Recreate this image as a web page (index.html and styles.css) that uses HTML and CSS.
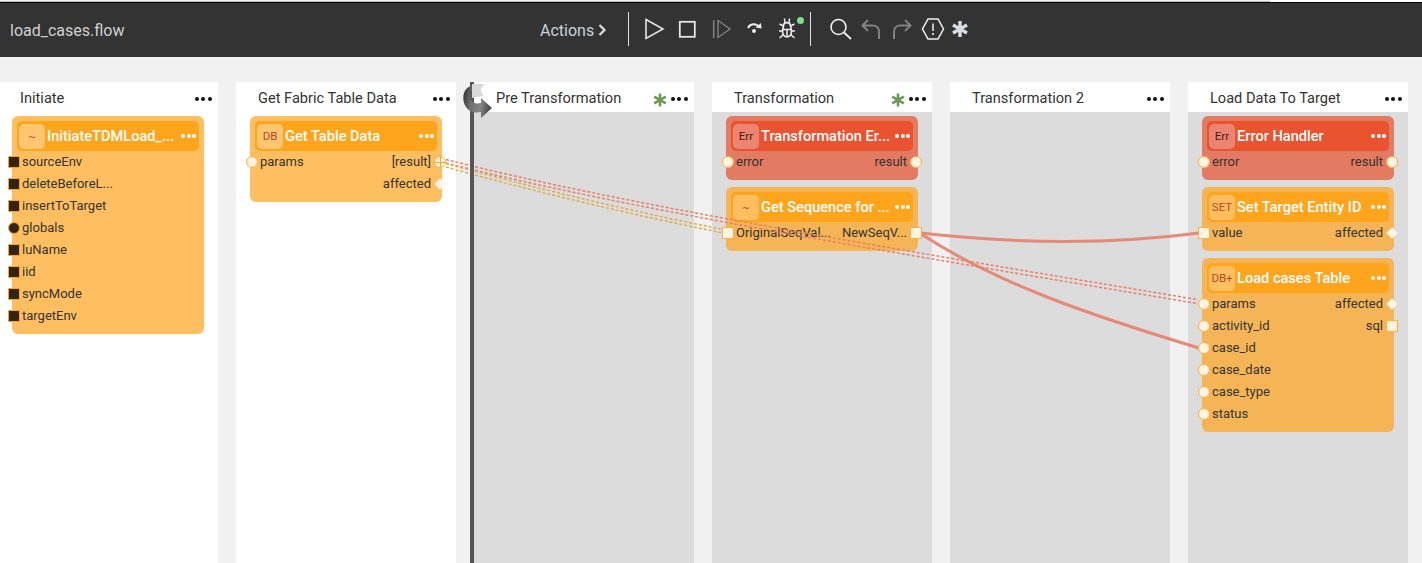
FILE: index.html
```html
<!DOCTYPE html>
<html lang="en">
<head>
<meta charset="utf-8">
<title>load_cases.flow</title>
<link rel="stylesheet" href="styles.css">
</head>
<body>
<div class="app">
  <div class="topline"><div class="topline-fill"></div></div>
  <header class="bar">
    <div class="file">load_cases.flow</div>
    <div class="actions">Actions<svg class="chev" viewBox="0 0 10 14"><path d="M2.5 2 L7.5 7 L2.5 12" fill="none" stroke="#ddd" stroke-width="2.2"/></svg></div>
    <div class="sep sep-a"></div>
    <div class="tools tools-a">
      <svg class="ico" viewBox="0 0 24 24"><path d="M4 2.5 L21 12 L4 21.5 Z" fill="none" stroke="#e4e4e4" stroke-width="1.6"/></svg>
      <svg class="ico" viewBox="0 0 24 24"><rect x="4.8" y="4.8" width="15" height="15" fill="none" stroke="#e4e4e4" stroke-width="1.8"/></svg>
      <svg class="ico" viewBox="0 0 24 24"><path d="M5.7 3 V21" stroke="#808080" stroke-width="1.6" fill="none"/><path d="M10 3.5 L22 12 L10 20.5 Z" fill="none" stroke="#808080" stroke-width="1.4"/></svg>
      <svg class="ico" viewBox="0 0 24 24"><path d="M7 11 C9 6.5 15 6 18 10" fill="none" stroke="#eee" stroke-width="2"/><path d="M14.5 10.5 L20.5 11.5 L20 6 Z" fill="#eee"/><circle cx="13" cy="14" r="2" fill="#eee"/></svg>
      <svg class="ico" viewBox="0 0 24 24"><path d="M9.5 9 C9.500 4.500 16.500 4.500 16.500 9 L17.500 14 C17.500 22 8.500 22 8.500 14 Z" fill="none" stroke="#ececec" stroke-width="1.700"/><path d="M9 12.500 H17 M13 12.500 V20 M10.500 1.500 L11 6 M15.500 1.500 L15 6 M9.500 9 L5.500 7 M16.500 9 L20.500 7 M9 14 H5 M17 14 H21 M9.500 17.500 L5.500 21 M16.500 17.500 L20.500 21" fill="none" stroke="#ececec" stroke-width="1.500"/></svg>
      <span class="live-dot"></span>
    </div>
    <div class="sep sep-b"></div>
    <div class="tools tools-b">
      <svg class="ico" viewBox="0 0 24 24"><circle cx="10.500" cy="10" r="7.500" fill="none" stroke="#f0f0f0" stroke-width="1.600"/><path d="M16 15.500 L23 22" stroke="#f0f0f0" stroke-width="1.800"/></svg>
      <svg class="ico" viewBox="0 0 24 24"><path d="M9 3 L3.500 8.500 L9 14 M4 8.500 H14 C18.500 8.500 20 12 20 15 V22" fill="none" stroke="#828282" stroke-width="2"/></svg>
      <svg class="ico" viewBox="0 0 24 24"><path d="M15 3 L20.500 8.500 L15 14 M20 8.500 H10 C5.500 8.500 4 12 4 15 V22" fill="none" stroke="#828282" stroke-width="2"/></svg>
      <svg class="ico" viewBox="0 0 24 24"><path d="M7 2 H17 L22.500 12 L17 22 H7 L1.500 12 Z" fill="none" stroke="#f0f0f0" stroke-width="1.500"/><path d="M12 6.500 V14" stroke="#f0f0f0" stroke-width="1.500"/><circle cx="12" cy="17" r="1.100" fill="#f0f0f0"/></svg>
      <svg class="ico ico-star" viewBox="0 0 24 24"><path d="M12 4 V20 M5 8 L19 16 M19 8 L5 16" stroke="#d8dce4" stroke-width="3.400" fill="none"/></svg>
    </div>
  </header>

  <main class="stage">
    <section class="col col-light">
      <div class="col-head"><span class="col-title">Initiate</span><span class="dots"><i></i><i></i><i></i></span></div>
      <div class="node node-bright">
        <div class="node-head"><span class="badge">~</span><span class="node-title">InitiateTDMLoad_...</span><span class="dots dots-white"><i></i><i></i><i></i></span></div>
        <div class="row"><span class="port port-l port-dark"></span><span>sourceEnv</span></div>
        <div class="row"><span class="port port-l port-dark"></span><span>deleteBeforeL...</span></div>
        <div class="row"><span class="port port-l port-dark"></span><span>insertToTarget</span></div>
        <div class="row"><span class="port port-l port-dark port-round"></span><span>globals</span></div>
        <div class="row"><span class="port port-l port-dark"></span><span>luName</span></div>
        <div class="row"><span class="port port-l port-dark"></span><span>iid</span></div>
        <div class="row"><span class="port port-l port-dark"></span><span>syncMode</span></div>
        <div class="row"><span class="port port-l port-dark"></span><span>targetEnv</span></div>
      </div>
    </section>

    <section class="col col-light">
      <div class="col-head"><span class="col-title">Get Fabric Table Data</span><span class="dots"><i></i><i></i><i></i></span></div>
      <div class="node node-bright">
        <div class="node-head"><span class="badge">DB</span><span class="node-title">Get Table Data</span><span class="dots dots-white"><i></i><i></i><i></i></span></div>
        <div class="row"><span class="port port-l port-round"></span><span>params</span><span>[result]</span><span class="port port-r port-round port-cross"></span></div>
        <div class="row row-end"><span>affected</span><span class="port port-r port-diamond"></span></div>
      </div>
    </section>

    <section class="col col-gray">
      <div class="col-head"><span class="col-title">Pre Transformation</span><svg class="flag-star" viewBox="0 0 14 14"><path d="M7 0.500 V13.500 M1.200 3.700 L12.800 10.300 M12.800 3.700 L1.200 10.300" stroke="#6a9b55" stroke-width="2.600" fill="none"/></svg><span class="dots"><i></i><i></i><i></i></span></div>
    </section>

    <section class="col col-gray">
      <div class="col-head"><span class="col-title">Transformation</span><svg class="flag-star" viewBox="0 0 14 14"><path d="M7 0.500 V13.500 M1.200 3.700 L12.800 10.300 M12.800 3.700 L1.200 10.300" stroke="#6a9b55" stroke-width="2.600" fill="none"/></svg><span class="dots"><i></i><i></i><i></i></span></div>
      <div class="node node-err">
        <div class="node-head"><span class="badge">Err</span><span class="node-title">Transformation Er...</span><span class="dots dots-white"><i></i><i></i><i></i></span></div>
        <div class="row"><span class="port port-l port-round"></span><span>error</span><span>result</span><span class="port port-r port-round"></span></div>
      </div>
      <div class="node">
        <div class="node-head"><span class="badge">~</span><span class="node-title">Get Sequence for ...</span><span class="dots dots-white"><i></i><i></i><i></i></span></div>
        <div class="row"><span class="port port-l"></span><span>OriginalSeqVal...</span><span>NewSeqV...</span><span class="port port-r"></span></div>
      </div>
    </section>

    <section class="col col-gray">
      <div class="col-head"><span class="col-title">Transformation 2</span><span class="dots"><i></i><i></i><i></i></span></div>
    </section>

    <section class="col col-gray">
      <div class="col-head"><span class="col-title">Load Data To Target</span><span class="dots"><i></i><i></i><i></i></span></div>
      <div class="node node-err">
        <div class="node-head"><span class="badge">Err</span><span class="node-title">Error Handler</span><span class="dots dots-white"><i></i><i></i><i></i></span></div>
        <div class="row"><span class="port port-l port-round"></span><span>error</span><span>result</span><span class="port port-r port-round"></span></div>
      </div>
      <div class="node">
        <div class="node-head"><span class="badge">SET</span><span class="node-title">Set Target Entity ID</span><span class="dots dots-white"><i></i><i></i><i></i></span></div>
        <div class="row"><span class="port port-l"></span><span>value</span><span>affected</span><span class="port port-r port-diamond"></span></div>
      </div>
      <div class="node">
        <div class="node-head"><span class="badge">DB+</span><span class="node-title">Load cases Table</span><span class="dots dots-white"><i></i><i></i><i></i></span></div>
        <div class="row"><span class="port port-l port-round"></span><span>params</span><span>affected</span><span class="port port-r port-diamond"></span></div>
        <div class="row"><span class="port port-l port-round"></span><span>activity_id</span><span>sql</span><span class="port port-r"></span></div>
        <div class="row"><span class="port port-l port-round"></span><span>case_id</span></div>
        <div class="row"><span class="port port-l port-round"></span><span>case_date</span></div>
        <div class="row"><span class="port port-l port-round"></span><span>case_type</span></div>
        <div class="row"><span class="port port-l port-round"></span><span>status</span></div>
      </div>
    </section>
  </main>

  <svg class="wires" viewBox="0 0 1422 563">
    <path class="dash dash-red" d="M446 159.500 C 620 204, 900 250, 1197 299.500"/>
    <path class="dash dash-red" d="M446 163 C 620 207.500, 900 254, 1197 303.500"/>
    <path class="dash dash-yellow" d="M446 163.500 C 530 187, 630 211, 721 229"/>
    <path class="dash dash-yellow" d="M446 167 C 530 190.500, 630 214.500, 721 232.500"/>
    <path class="solid" d="M921 233 C 1000 242, 1100 246, 1199 233"/>
    <path class="solid" d="M921 234 C 1000 285, 1090 315, 1199 348"/>
  </svg>

  <div class="split"></div>
  <svg class="curl" viewBox="0 0 32 38">
    <defs>
      <linearGradient id="swoosh" x1="0" y1="0" x2="1" y2="0.200">
        <stop offset="0" stop-color="#2a2a2a"/>
        <stop offset="0.350" stop-color="#707070"/>
        <stop offset="0.700" stop-color="#858585"/>
        <stop offset="1" stop-color="#4e4e4e"/>
      </linearGradient>
    </defs>
    <path d="M10 1 H22 L18.500 7 L21.500 13 L10 15 Z" fill="#d8d8d8"/>
    <path d="M10 3 C1 4,-1 17,4 24 C8 30,14 30,19 29 L19 35 L30 25 L19 15 L19 20 C14 21,11 20,9 17 C7 13,8 9,10 7 Z" fill="url(#swoosh)"/>
  </svg>
</div>
</body>
</html>
```
FILE: styles.css
```css
* { box-sizing: border-box; }
html, body { margin: 0; padding: 0; }
body { background: #f1f1f1; font-family: Roboto, "Liberation Sans", sans-serif; color: #333; }
.app { position: relative; width: 1422px; height: 563px; overflow: hidden; }

.topline { height: 2px; background: #fff; }
.topline-fill { width: 1270px; height: 2px; background: linear-gradient(#f0f0f0 50%, #bdbdbd 50%); }

.bar {
  display: flex;
  align-items: center;
  height: 55px;
  padding-left: 10px;
  background: #333;
  border-top: 1px solid #000;
}
.file { width: 530px; font-size: 16px; color: #d0d0d0; }
.actions { display: flex; align-items: center; width: 88px; font-size: 16px; color: #c8d0d8; }
.chev { width: 10px; height: 14px; margin-left: 3px; }
.sep { width: 1px; height: 34px; background: #e0e0e0; margin-top: -2px; }
.tools { display: flex; align-items: center; margin-top: -2px; position: relative; }
.tools-a { gap: 9px; margin-left: 13px; width: 168px; }
.tools-b { gap: 7px; margin-left: 17px; }
.ico { width: 24px; height: 24px; display: block; }
.ico-star { margin-left: -4px; }
.live-dot {
  position: absolute;
  left: 155px;
  top: 0;
  width: 7px;
  height: 7px;
  border-radius: 50%;
  background: #7fe08a;
}

.stage {
  display: flex;
  gap: 18px;
  height: 506px;
  margin-left: -2px;
  padding-top: 25px;
}
.col { flex: 0 0 220px; min-width: 0; display: flex; flex-direction: column; gap: 7px; }
.col-light { background: #fff; }
.col-gray { background: #dcdcdc; }
.col-head {
  display: flex;
  align-items: center;
  height: 30px;
  margin-bottom: -3px;
  padding: 2px 6px 0 22px;
  background: #fff;
}
.col-title { flex: 1; font-size: 14.600px; color: #333; }
.dots { display: flex; gap: 2.700px; margin-top: 2px; }
.dots i { width: 4px; height: 4px; border-radius: 50%; background: #111; }
.dots-white { gap: 1.500px; margin-top: -1px; }
.dots-white i { background: #fff; }
.flag-star {
  width: 14px;
  height: 14px;
  margin-right: 4px;
  margin-top: 4px;
}

.node {
  position: relative;
  margin: 0 14px;
  padding: 5px 0 7px;
  border-radius: 6px;
  background: #f5b556;
}
.node-bright { background: #ffbf60; }
.node-err { background: #e37b63; }
.node-head {
  display: flex;
  align-items: center;
  height: 30px;
  margin: 0 5px;
  padding: 0 3px 0 2px;
  border-radius: 5px;
  background: #ffa41d;
  color: #fff;
}
.node-err .node-head { background: #e9532f; }
.badge {
  flex: 0 0 26px;
  height: 25px;
  border-radius: 5px;
  background: #ffbf60;
  color: #b5492a;
  font-size: 11.500px;
  line-height: 25px;
  text-align: center;
}
.node-bright .badge { background: #ffc670; }
.node-err .badge { background: #ed8470; color: #3d2018; }
.node-title { flex: 1; margin-left: 2px; font-size: 14.600px; font-weight: 500; white-space: nowrap; overflow: hidden; }

.row {
  position: relative;
  display: flex;
  justify-content: space-between;
  align-items: center;
  height: 22px;
  padding: 0 11px 2px 10px;
  font-size: 13px;
  color: #333;
}
.row-end { justify-content: flex-end; }

.port {
  position: absolute;
  top: 5px;
  width: 12px;
  height: 12px;
  background: #fff4e3;
  border: 1px solid #ffaf3a;
  z-index: 3;
}
.port-l { left: -4px; }
.port-r { right: -4px; }
.port-round { border-radius: 50%; }
.port-dark { background: #2f2418; border-color: #ffa41d; }
.port-diamond {
  top: 7px;
  right: -2px;
  width: 8px;
  height: 8px;
  border: 0;
  transform: rotate(45deg);
}
.port-cross {
  background:
    linear-gradient(#ffa41d, #ffa41d) center / 100% 1px no-repeat,
    linear-gradient(#ffa41d, #ffa41d) center / 1px 100% no-repeat,
    #fff4e3;
}

.wires { position: absolute; left: 0; top: 0; width: 1422px; height: 563px; z-index: 2; pointer-events: none; }
.dash { fill: none; stroke-width: 1.500; stroke-dasharray: 3 2; }
.dash-red { stroke: #e8806a; }
.dash-yellow { stroke: #dcb048; }
.solid { fill: none; stroke: #e5826c; stroke-width: 3; stroke-opacity: 0.92; }

.split { position: absolute; left: 470px; top: 82px; bottom: 0; width: 4px; background: #555; z-index: 3; }
.curl { position: absolute; left: 462px; top: 83px; width: 32px; height: 38px; z-index: 4; }
```
